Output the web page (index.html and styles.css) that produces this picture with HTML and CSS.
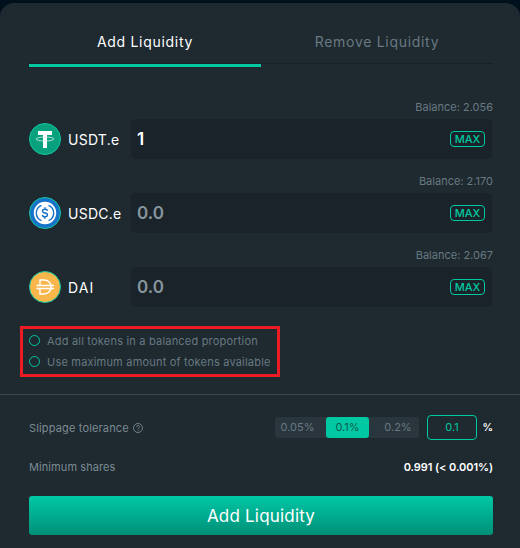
FILE: index.html
```html
<!DOCTYPE html>
<html lang="en">
<head>
<meta charset="utf-8">
<title>Add Liquidity</title>
<link rel="stylesheet" href="styles.css">
</head>
<body>
<main class="panel">
  <section class="deposit">
    <nav class="tabs">
      <a class="tab active"><span class="tab-add">Add Liquidity</span></a>
      <a class="tab"><span class="tab-remove">Remove Liquidity</span></a>
    </nav>
    <div class="tokens">
      <div class="balance">Balance: 2.056</div>
      <div class="token">
        <svg class="coin" viewBox="0 0 32 32"><circle cx="16" cy="16" r="15.5" fill="#07a17d" stroke="#10c7a1"/><path d="M9 8h14v4h-5v13h-4V12H9z" fill="#fff"/><ellipse cx="16" cy="16" rx="9" ry="2" fill="none" stroke="#d5f0e8" stroke-width=".8"/></svg>
        <span class="name usdt">USDT.e</span>
        <div class="field filled"><span class="amount">1</span><button class="max">MAX</button></div>
      </div>
      <div class="balance">Balance: 2.170</div>
      <div class="token">
        <svg class="coin" viewBox="0 0 32 32"><circle cx="16" cy="16" r="15.5" fill="#1673c8" stroke="#10c7a1"/><circle cx="16" cy="16" r="11.2" fill="#fff"/><g fill="none" stroke="#1673c8" stroke-width="1.4"><path d="M12.500 8.300a8.300 8.300 0 0 0 0 15.400M19.500 8.300a8.300 8.300 0 0 1 0 15.400"/><path d="M18.600 13.900c-.2-1.200-1.100-1.700-2.600-1.700-3.300 0-3.300 3.400 0 3.800s3.300 3.800 0 3.800c-1.600 0-2.500-.7-2.600-1.900M16 10.300v2m0 7.500v2"/></g></svg>
        <span class="name usdc">USDC.e</span>
        <div class="field"><span class="amount">0.0</span><button class="max">MAX</button></div>
      </div>
      <div class="balance">Balance: 2.067</div>
      <div class="token">
        <svg class="coin" viewBox="0 0 32 32"><circle cx="16" cy="16" r="15.5" fill="#f9b64b" stroke="#10c7a1"/><path d="M11 14V9h4c9.500 0 9.500 14 0 14h-4v-5M7.500 14.500h17.500M7.500 17.500h17.500" fill="none" stroke="#fff" stroke-width="1.4"/></svg>
        <span class="name dai">DAI</span>
        <div class="field"><span class="amount">0.0</span><button class="max">MAX</button></div>
      </div>
    </div>
    <div class="options">
      <label class="option"><i class="radio"></i><span>Add all tokens in a balanced proportion</span></label>
      <label class="option"><i class="radio"></i><span>Use maximum amount of tokens available</span></label>
    </div>
  </section>
  <section class="summary">
    <div class="row slippage">
      <span class="slip-label">Slippage tolerance</span>
      <svg class="help" viewBox="0 0 10 10"><circle cx="5" cy="5" r="4.5"/><path d="M3.600 4c0-2 2.900-2 2.900-.2C6.500 4.900 5 4.800 5 6.200M5 7v.9"/></svg>
      <div class="segments"><span class="seg s1">0.05%</span><span class="seg s2">0.1%</span><span class="seg s3">0.2%</span></div>
      <div class="custom">0.1</div><b class="percent">%</b>
    </div>
    <div class="row shares"><span class="min-label">Minimum shares</span><span class="value">0.991 (&lt; 0.001%)</span></div>
    <button class="submit">Add Liquidity</button>
  </section>
</main>
</body>
</html>
```
FILE: styles.css
```css
* { box-sizing: border-box; }
body { margin: 0; padding-top: 3px; background: #00101d; color: #fff; font-family: Inter, sans-serif; font-size: 11px; overflow: hidden; }
button { font: inherit; padding: 0; border: 0; margin: 0; }
.panel { height: 545px; background: #1e2930; border-radius: 14px 14px 0 0; }
.deposit { height: 392px; padding: 0 27px 0 29px; border-bottom: 1px solid #3a464c; }
.tabs { display: flex; height: 64px; background: linear-gradient(#172127, #172127) 0 60px / 100% 1px no-repeat; }
.tab { flex: 1; height: 64px; padding-top: 29px; text-align: center; color: #687981; font-size: 14px; line-height: 20px; white-space: nowrap; }
.tab.active { color: #fff; border-bottom: 3px solid #00c8a2; }
.tab-add { letter-spacing: .7px; }
.tab-remove { letter-spacing: .7px; }
.tokens { padding-top: 33px; }
.balance { height: 19px; line-height: 14px; text-align: right; color: #687981; }
.token { display: flex; align-items: center; height: 40px; margin-bottom: 15px; }
.coin { width: 32px; height: 32px; flex: none; }
.name { width: 63px; margin-left: 7px; font-size: 14px; letter-spacing: .25px; white-space: nowrap; }
.dai { letter-spacing: 1.1px; }
.field { display: flex; align-items: center; justify-content: space-between; width: 361px; height: 40px; padding: 0 7px 0 6px; background: #1a2329; border-radius: 5px; color: #87959d; font-size: 17px; font-weight: 600; }
.filled { color: #fff; }
.max { width: 35px; height: 16px; border: 1px solid #00c8a2; border-radius: 4px; background: none; color: #00c8a2; font-size: 11px; font-weight: 500; line-height: 14px; }
.options { width: 260px; height: 51px; margin: 19px 0 0 -9px; padding: 1px 0 0 6px; border: 3px solid #ed1c24; }
.option { display: flex; align-items: center; height: 21px; color: #687981; letter-spacing: .2px; white-space: nowrap; }
.radio { width: 11px; height: 11px; margin-right: 7px; border: 1px solid #00c8a2; border-radius: 50%; }
.summary { padding: 19px 27px 0 29px; }
.row { display: flex; align-items: center; color: #7d8b93; }
.slippage { height: 27px; }
.help { width: 10px; height: 10px; margin-left: 4px; fill: none; stroke: #7d8b93; stroke-width: .9; }
.slip-label { width: 100px; letter-spacing: .15px; white-space: nowrap; }
.min-label { letter-spacing: .08px; }
.segments { display: flex; width: 144px; height: 21px; margin-left: 132px; background: #2a363e; border-radius: 3px; color: #687981; line-height: 21px; text-align: center; }
.s1 { width: 51px; padding-right: 6px; }
.s2 { width: 43px; background: #00c8a2; border-radius: 3px; color: #075c50; }
.s3 { flex: 1; padding-left: 8px; }
.custom { width: 50px; height: 25px; margin-left: 8px; border: 1px solid #00c8a2; border-radius: 4px; color: #00c8a2; text-align: center; line-height: 23px; }
.percent { margin-left: auto; color: #fff; font-size: 10.5px; font-weight: 600; }
.shares { height: 20px; margin-top: 16px; justify-content: space-between; }
.value { color: #fff; font-weight: 600; letter-spacing: -.08px; }
.submit { display: block; width: 100%; height: 39px; margin-top: 19px; border-radius: 3px; background: linear-gradient(#00c8a6, #008f77); color: #fff; font-size: 17px; letter-spacing: .2px; }
```
